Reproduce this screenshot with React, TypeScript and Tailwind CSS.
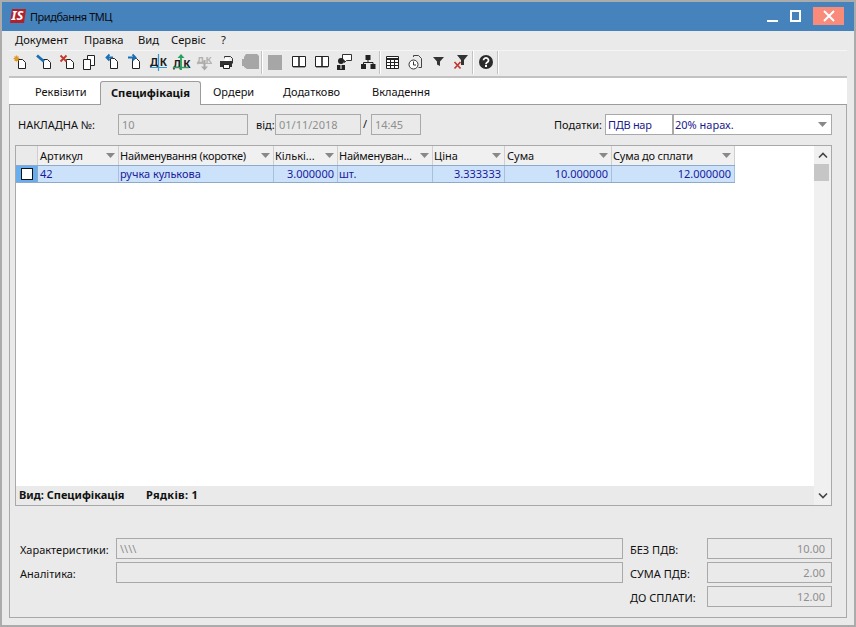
import React from "react";

function Icon({ x, y = 53, w = 20, h = 20, children }: { x: number; y?: number; w?: number; h?: number; children?: React.ReactNode }) {
  return (
    <svg className="absolute" style={{ left: x, top: y }} width={w} height={h} viewBox={`0 0 ${w} ${h}`} fill="none">
      {children}
    </svg>
  );
}
const Doc = () => <path d="M7.500 6.500h4l3 3v6h-7z" fill="#fff" stroke="#222" />;
const Sep = ({ x }: { x: number }) => <div className="absolute top-[51px] w-[2px] h-[23px] bg-[#c2c2c2] border-r border-white" style={{ left: x }} />;

function Book({ x }: { x: number }) {
  return (
    <Icon x={x} y={53} w={18} h={18}>
      <path d="M1.500 3.500h13v10h-13z" fill="#fff" stroke="#222" />
      <path d="M8 3.500v11" stroke="#222" strokeWidth="1.600" />
      <path d="M2 14.500h12" stroke="#999" />
    </Icon>
  );
}

function Toolbar() {
  return (
    <>
      <Icon x={11} y={53}>
        <Doc />
        <path d="M5.500 2.500v6M2.500 5.500h6M3.500 3.500l4 4M7.500 3.500l-4 4" stroke="#e09a20" strokeWidth="1.200" />
      </Icon>
      <Icon x={36} y={53}>
        <Doc />
        <path d="M1 2.500l7 6" stroke="#1a6fb5" strokeWidth="2.800" />
      </Icon>
      <Icon x={59} y={53}>
        <Doc />
        <path d="M1.500 2.500l6 6M7.500 2.500l-6 6" stroke="#c0392b" strokeWidth="1.800" />
      </Icon>
      <Icon x={82} y={53}>
        <path d="M5.500 2.500h7v10h-7z" fill="#fff" stroke="#222" />
        <path d="M1.500 6.500h7v10h-7z" fill="#fff" stroke="#222" />
      </Icon>
      <Icon x={104} y={53}>
        <path d="M6.500 5.500h4l3 3v7h-7z" fill="#fff" stroke="#222" />
        <path d="M9 4.500H3M5.500 1.500l-3 3 3 3" stroke="#1a6fb5" strokeWidth="1.800" />
      </Icon>
      <Icon x={127} y={53}>
        <path d="M5.500 5.500h4l3 3v7h-7z" fill="#fff" stroke="#222" />
        <path d="M1 4.500h7M5.500 1.500l3 3-3 3" stroke="#1a6fb5" strokeWidth="1.800" />
      </Icon>

      <span className="absolute left-[150px] top-[56px] text-[10.500px] leading-[12px] font-bold text-[#1a1a1a] tracking-[1.500px]">ДК</span>
      <Icon x={149} y={54} w={20} h={18}>
        <path d="M1 13.500h17" stroke="#2f9bd6" />
        <path d="M9.500 0v17" stroke="#2f9bd6" strokeWidth="1.200" />
      </Icon>
      <span className="absolute left-[173px] top-[58px] text-[10.500px] leading-[12px] font-bold text-[#1a1a1a] tracking-[2px]">ДК</span>
      <Icon x={172} y={53} w={20} h={18}>
        <path d="M1 14.500h16" stroke="#27a060" strokeWidth="1.400" />
        <path d="M9 17V3" stroke="#27a060" strokeWidth="1.800" />
        <path d="M5.500 5L9 1l3.500 4z" fill="#27a060" />
      </Icon>
      <span className="absolute left-[197px] top-[55px] text-[9px] leading-[10px] font-bold text-[#b0b0b0] tracking-[1.500px]">ДК</span>
      <Icon x={196} y={54} w={18} h={18}>
        <path d="M1 9.500h15" stroke="#b5b5b5" />
        <path d="M8.500 6v8" stroke="#a9a9a9" strokeWidth="2" />
        <path d="M5 12.500h7l-3.500 4z" fill="#a9a9a9" />
      </Icon>

      <Icon x={219} y={54} w={18} h={18}>
        <path d="M5.500 4.500v-2h6l2 2v5" stroke="#333" />
        <path d="M1 7h12v6H1z" fill="#333" />
        <path d="M4.500 10.500h6v4h-6z" fill="#fff" stroke="#222" />
        <path d="M5.500 3.500h5v3.500h-5z" fill="#fff" />
      </Icon>
      <Icon x={241} y={53} w={19} h={18}>
        <path d="M5 1h11l2 2v13H6l-3-2V4z" fill="#a6a6a6" />
        <path d="M1 6h3v7H1z" fill="#a6a6a6" />
      </Icon>
      <Sep x={261} />
      <div className="absolute left-[268px] top-[55px] w-[14px] h-[15px] bg-[#a6a6a6]" />
      <Book x={291} />
      <Book x={314} />
      <Icon x={336} y={53} w={18} h={18}>
        <path d="M6.500 1.500h9v6h-5l-2 2v-2h-2z" fill="#fff" stroke="#333" />
        <circle cx="5" cy="8" r="3" fill="#222" />
        <path d="M1 12h8v5H1z" fill="#222" />
        <path d="M4.500 12h1v4h-1z" fill="#fff" />
      </Icon>
      <Icon x={360} y={53} w={17} h={18}>
        <path d="M5.500 2h5v5h-5zM1 11h5v5H1zM10.500 11h5v5h-5z" fill="#222" />
        <path d="M8 7v2.500M3.500 11V9.500h9.500V11" stroke="#222" />
      </Icon>
      <Sep x={379} />
      <Icon x={385} y={53} w={16} h={18}>
        <path d="M1.500 3.500h12v12h-12z" fill="#fff" stroke="#222" />
        <path d="M1.500 6h12" stroke="#222" strokeWidth="2" />
        <path d="M1.500 9.500h12M1.500 12.500h12M5.500 6v9M9.500 6v9" stroke="#222" />
      </Icon>
      <Icon x={407} y={53} w={18} h={18}>
        <path d="M6.500 4V2.500h5l3 3v9h-3" stroke="#444" />
        <circle cx="6.500" cy="11.500" r="4.500" fill="#fff" stroke="#333" />
        <path d="M6.500 8.500v3.500h2.500" stroke="#333" />
      </Icon>
      <Icon x={432} y={53} w={13} h={14}>
        <path d="M1 4h11L8 8.500V13l-3-1.500V8.500z" fill="#333" />
      </Icon>
      <Icon x={453} y={53} w={16} h={18}>
        <path d="M4 2h11l-4 5v5H8V7z" fill="#333" />
        <path d="M1.500 9l6 6.500M7.500 9l-6 6.500" stroke="#c0392b" strokeWidth="1.700" />
      </Icon>
      <Sep x={472} />
      <Icon x={478} y={54} w={16} h={16}>
        <circle cx="8" cy="8" r="7" fill="#2b2b2b" />
        <path d="M5.500 6.200a2.500 2.300 0 1 1 3.800 2c-1 .6-1.300 1-1.300 2" stroke="#fff" strokeWidth="1.800" />
        <path d="M7 11h2v2H7z" fill="#fff" />
      </Icon>
      <Sep x={497} />
    </>
  );
}

const columns = [
  { label: "Артикул", w: 81, cls: "pl-[2px]" },
  { label: "Найменування (коротке)", w: 155, cls: "pl-[1px] tracking-[-0.27px]" },
  { label: "Кількі...", w: 64, cls: "pl-[1px]" },
  { label: "Найменуван...", w: 95, cls: "pl-[1px] tracking-[-0.25px]" },
  { label: "Ціна", w: 72, cls: "pl-[1px]" },
  { label: "Сума", w: 107, cls: "pl-[2px]" },
  { label: "Сума до сплати", w: 123, cls: "pl-[1px] tracking-[-0.2px]" },
];

const row = [
  { v: "42", cls: "pl-[2px]" },
  { v: "ручка кулькова", cls: "pl-[1px]" },
  { v: "3.000000", cls: "text-right pr-[3px]" },
  { v: "шт.", cls: "pl-[1px]" },
  { v: "3.333333", cls: "text-right pr-[3px]" },
  { v: "10.000000", cls: "text-right pr-[3px]" },
  { v: "12.000000", cls: "text-right pr-[3px]" },
];

function Field({ className, children, right }: { className: string; children?: React.ReactNode; right?: boolean }) {
  return (
    <div
      className={`absolute h-[21px] border border-[#a9a9a9] text-[11px] leading-[20px] text-[#8f8f8f] px-[3px] ${right ? "text-right pr-[6px]" : ""} ${className}`}
    >
      {children}
    </div>
  );
}

function Label({ className, children }: { className: string; children: React.ReactNode }) {
  return <span className={`absolute text-[11px] leading-[14px] text-[#111] whitespace-nowrap ${className}`}>{children}</span>;
}

export default function App() {
  return (
    <div className="relative w-[856px] h-[627px] overflow-hidden bg-[#ababab] [font-family:'Liberation_Sans',Arial,sans-serif]">
      <div className="absolute left-[2px] top-[2px] w-[852px] h-[623px] bg-[#eaeaea]">
        <div className="h-[29px] bg-[#4682bc]" />
      </div>

      {/* Title bar */}
      <Icon x={10} y={9} w={16} h={14}>
        <path d="M2 0h14l-2 14H0z" fill="#b3202a" />
      </Icon>
      <span className="absolute left-[10px] top-[8px] w-[15px] text-center text-[13px] leading-[15px] font-bold italic text-white">IS</span>
      <span className="absolute left-[30px] top-[9px] text-[11px] tracking-[-0.45px] leading-[15px] text-[#0b0b0b]">Придбання ТМЦ</span>
      <div className="absolute left-[767px] top-[20px] w-[11px] h-[2px] bg-white" />
      <div className="absolute left-[790px] top-[10px] w-[11px] h-[12px] border-2 border-white" />
      <div className="absolute left-[813px] top-[7px] w-[31px] h-[18px] bg-[#f98b7a] flex items-center justify-center">
        <svg width="12" height="12" viewBox="0 0 12 12">
          <path d="M1 1l10 10M11 1L1 11" stroke="#fff" strokeWidth="2" />
        </svg>
      </div>

      {/* Menu */}
      <div className="absolute left-[15px] top-[33px] flex text-[11.200px] leading-[14px] text-[#111]">
        <span className="w-[69px]">Документ</span>
        <span className="w-[54px]">Правка</span>
        <span className="w-[33px]">Вид</span>
        <span className="w-[50px]">Сервіс</span>
        <span>?</span>
      </div>
      <div className="absolute left-[9px] top-[50px] w-[838px] h-px bg-[#f5f5f5]" />

      <Toolbar />

      {/* Tab strip */}
      <div className="absolute left-[9px] top-[76px] w-[838px] h-[2px] bg-[#c2c2c2]" />
      <div className="absolute left-[9px] top-[78px] w-[838px] h-[26px] bg-white" />
      <div className="absolute left-[9px] top-[104px] w-[838px] h-[514px] border-l border-r border-b border-[#a9a9a9]" />
      <div className="absolute left-[9px] top-[104px] w-[838px] h-px bg-[#9c9c9c]" />
      <div className="absolute left-[100px] top-[81px] w-[101px] h-[24px] bg-[#eaeaea] border border-b-0 border-[#9c9c9c] rounded-t-[3px] text-center text-[11.200px] leading-[21px] font-bold text-[#111]">
        Специфікація
      </div>
      <span className="absolute left-[35px] top-[85px] text-[11px] leading-[14px] text-[#111]">Реквізити</span>
      <span className="absolute left-[213px] top-[85px] text-[11px] leading-[14px] text-[#111]">Ордери</span>
      <span className="absolute left-[283px] top-[85px] text-[11px] leading-[14px] text-[#111]">Додатково</span>
      <span className="absolute left-[372px] top-[85px] text-[11px] leading-[14px] text-[#111]">Вкладення</span>

      {/* Header fields */}
      <Label className="left-[18px] top-[118px]">НАКЛАДНА №:</Label>
      <Field className="left-[118px] top-[114px] w-[130px]">10</Field>
      <Label className="left-[256px] top-[118px]">від:</Label>
      <Field className="left-[275px] top-[114px] w-[86px]">01/11/2018</Field>
      <Label className="left-[363px] top-[117px]">/</Label>
      <Field className="left-[371px] top-[114px] w-[50px]">14:45</Field>
      <Label className="left-[554px] top-[118px]">Податки:</Label>
      <div className="absolute left-[605px] top-[114px] w-[68px] h-[21px] bg-white border border-[#a9a9a9] px-[2px] text-[11px] tracking-[-0.3px] leading-[20px] text-[#1a1a8c]">
        ПДВ нар
      </div>
      <div className="absolute left-[673px] top-[114px] w-[159px] h-[21px] bg-white border border-[#a9a9a9] px-[1px] text-[11px] leading-[20px] text-[#1a1a8c]">
        20% нарах.
        <svg className="absolute right-[3px] top-[7px]" width="10" height="6" viewBox="0 0 10 6">
          <path d="M0 0h9L4.500 5z" fill="#888" />
        </svg>
      </div>

      {/* Grid */}
      <div className="absolute left-[15px] top-[145px] w-[817px] h-[361px] bg-white border border-[#a9a9a9]">
        <div className="absolute left-0 top-0 flex h-[19px] bg-[#f0f0f0]">
          <div className="w-[22px] h-[19px] bg-[#eaeaea] border-r border-[#cfcfcf]" />
          {columns.map((c) => (
            <div
              key={c.label}
              className={`relative h-[19px] border-r border-[#cfcfcf] text-[11px] leading-[20px] text-[#111] whitespace-nowrap overflow-hidden ${c.cls}`}
              style={{ width: c.w }}
            >
              {c.label}
              <svg className="absolute right-[3px] top-[7px]" width="9" height="5" viewBox="0 0 9 5">
                <path d="M0 0h9L4.500 5z" fill="#888" />
              </svg>
            </div>
          ))}
        </div>
        <div className="absolute left-0 top-[19px] flex h-[18px] bg-[#cce2fb] border-t border-b border-[#8fa9c9]">
          <div className="w-[22px] h-[16px] bg-[#66aef0] flex items-center justify-center border-r border-[#8fa9c9]">
            <div className="w-[12px] h-[12px] bg-white border-[1.500px] border-[#111]" />
          </div>
          {row.map((c, i) => (
            <div
              key={i}
              className={`h-[16px] border-r border-[#a8c0da] text-[11px] leading-[16px] text-[#1a1a9c] whitespace-nowrap ${c.cls}`}
              style={{ width: columns[i].w }}
            >
              {c.v}
            </div>
          ))}
        </div>
        {/* status */}
        <div className="absolute left-0 bottom-0 w-[798px] h-[19px] bg-[#eaeaea] flex text-[11px] leading-[17px] font-bold text-[#111]">
          <span className="ml-[3px] w-[127px]">Вид: Специфікація</span>
          <span className="tracking-[0.3px]">Рядків: 1</span>
        </div>
        {/* scrollbar */}
        <div className="absolute right-0 top-0 w-[17px] h-full bg-[#f0f0f0]">
          <svg className="absolute left-[4px] top-[6px]" width="10" height="7" viewBox="0 0 10 7">
            <path d="M1 5.500l4-4 4 4" stroke="#444" strokeWidth="1.600" fill="none" />
          </svg>
          <div className="absolute left-0 top-[18px] w-[15px] h-[17px] bg-[#c6c6c6]" />
          <svg className="absolute left-[4px] bottom-[6px]" width="10" height="7" viewBox="0 0 10 7">
            <path d="M1 1.500l4 4 4-4" stroke="#444" strokeWidth="1.600" fill="none" />
          </svg>
        </div>
      </div>

      {/* Bottom */}
      <Label className="left-[20px] top-[543px]">Характеристики:</Label>
      <Field className="left-[116px] top-[538px] w-[507px]">\\\\</Field>
      <Label className="left-[20px] top-[567px]">Аналітика:</Label>
      <Field className="left-[116px] top-[562px] w-[507px]" />
      <Label className="left-[630px] top-[543px]">БЕЗ ПДВ:</Label>
      <Field right className="left-[707px] top-[538px] w-[125px]">10.00</Field>
      <Label className="left-[630px] top-[567px]">СУМА ПДВ:</Label>
      <Field right className="left-[707px] top-[562px] w-[125px]">2.00</Field>
      <Label className="left-[630px] top-[591px]">ДО СПЛАТИ:</Label>
      <Field right className="left-[707px] top-[586px] w-[125px]">12.00</Field>
    </div>
  );
}
